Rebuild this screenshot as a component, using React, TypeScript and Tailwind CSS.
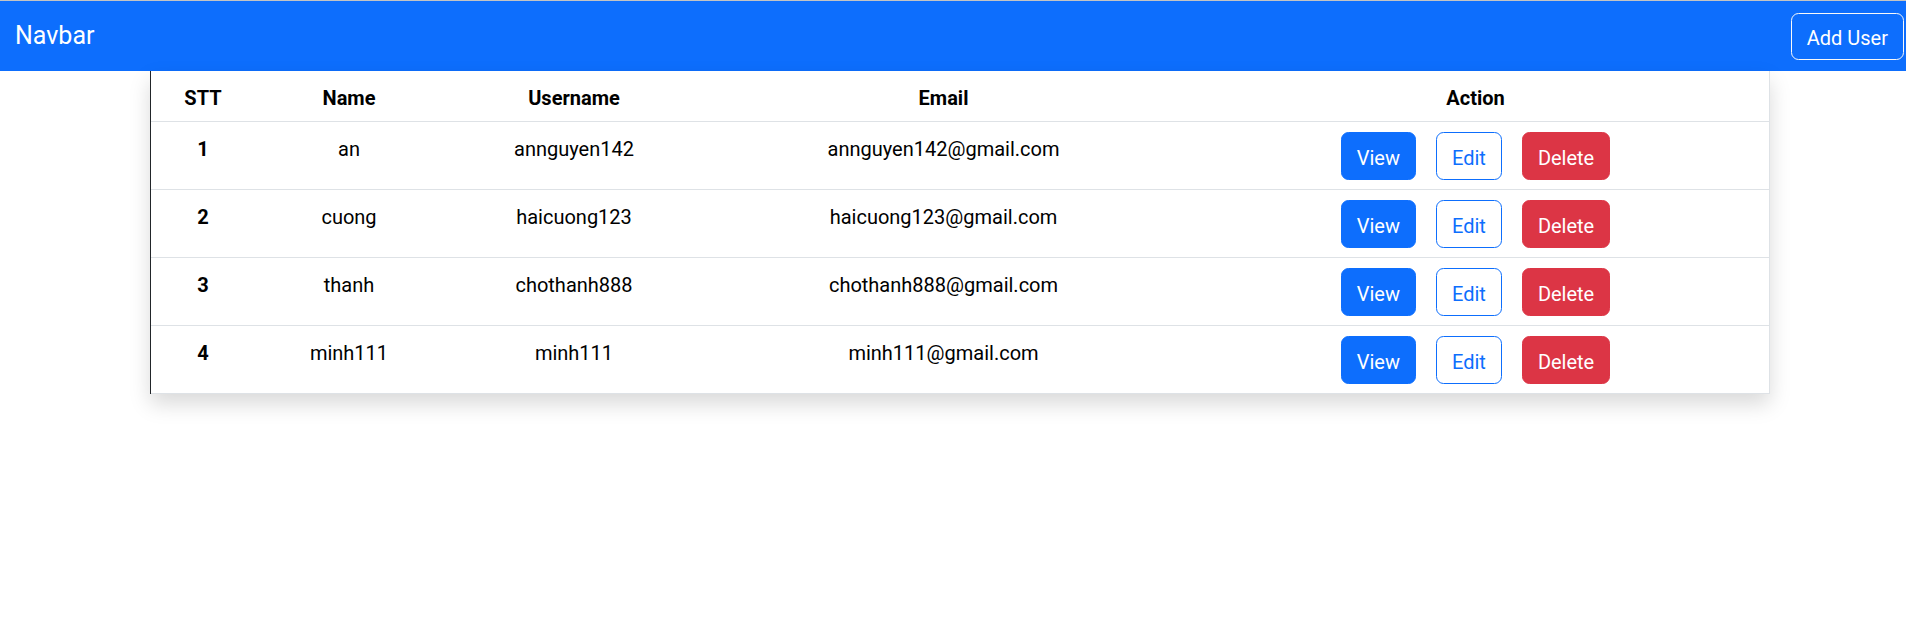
import React from 'react';

const users = [
  { id: 1, name: 'an', username: 'annguyen142', email: 'annguyen142@gmail.com' },
  { id: 2, name: 'cuong', username: 'haicuong123', email: 'haicuong123@gmail.com' },
  { id: 3, name: 'thanh', username: 'chothanh888', email: 'chothanh888@gmail.com' },
  { id: 4, name: 'minh111', username: 'minh111', email: 'minh111@gmail.com' },
];

const cols = 'grid grid-cols-[104px_188px_262px_477px_587px] border-b border-[#dee2e6]';

const App: React.FC = () => {
  return (
    <div className="min-h-screen bg-white text-[#212529] font-['Roboto','Noto_Sans',sans-serif] text-[20px]">
      {/* top hairline + navbar */}
      <div className="h-px bg-[#c4c4c4]" />
      <nav className="h-[70px] bg-[#0d6efd] flex items-center justify-between pl-[15px] pr-[2px]">
        <span className="text-[25px] leading-[37.5px] text-white">Navbar</span>
        <button className="h-[47px] px-[15px] pt-[3px] rounded-[7.5px] border border-[#f8f9fa] text-white text-[20px] leading-[30px]">
          Add User
        </button>
      </nav>

      {/* Users table */}
      <div className="ml-[150px] w-[1620px] bg-white border-l border-l-[#212529] border-r border-r-[#dee2e6] shadow-[0_10px_20px_rgba(0,0,0,0.15)]">
        <div className={`${cols} h-[51px] font-bold text-black text-center`}>
          <div className="pt-[12px] leading-[30px]">STT</div>
          <div className="pt-[12px] leading-[30px]">Name</div>
          <div className="pt-[12px] leading-[30px]">Username</div>
          <div className="pt-[12px] leading-[30px]">Email</div>
          <div className="pt-[12px] leading-[30px]">Action</div>
        </div>
        {users.map((u) => (
          <div key={u.id} className={`${cols} h-[68px] text-center text-black`}>
            <div className="pt-[11.5px] leading-[30px] font-bold">{u.id}</div>
            <div className="pt-[11.5px] leading-[30px]">{u.name}</div>
            <div className="pt-[11.5px] leading-[30px]">{u.username}</div>
            <div className="pt-[11.5px] leading-[30px]">{u.email}</div>
            <div className="pt-[10px] flex justify-center gap-[20px]">
              <button className="h-[47.5px] px-[15px] pt-[4px] rounded-[7.5px] bg-[#0d6efd] border border-[#0d6efd] text-white leading-[30px]">
                View
              </button>
              <button className="h-[47.5px] px-[15px] pt-[4px] rounded-[7.5px] bg-white border border-[#0d6efd] text-[#0d6efd] leading-[30px]">
                Edit
              </button>
              <button className="h-[47.5px] px-[15px] pt-[4px] rounded-[7.5px] bg-[#dc3545] border border-[#dc3545] text-white leading-[30px]">
                Delete
              </button>
            </div>
          </div>
        ))}
      </div>
    </div>
  );
};

export default App;
